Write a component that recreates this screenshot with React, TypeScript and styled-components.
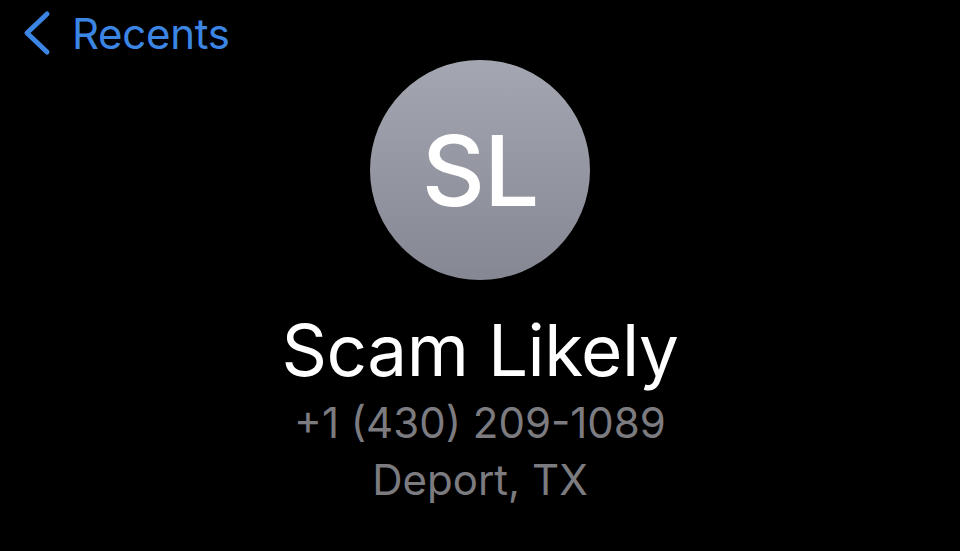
import { createGlobalStyle, styled } from "styled-components";

const GlobalStyle = createGlobalStyle`
  html, body {
    margin: 0;
    padding: 0;
    background: #000;
  }
  body {
    font-family: Inter, "Noto Sans", "Liberation Sans", sans-serif;
    -webkit-font-smoothing: antialiased;
  }
`;

const Screen = styled.div`
  width: 960px;
  height: 551px;
  background: #000;
  overflow: hidden;
  display: flex;
  flex-direction: column;
`;

const NavBar = styled.div`
  display: flex;
  align-items: center;
  height: 66px;
  padding-left: 20px;
`;

const BackButton = styled.button`
  display: flex;
  align-items: center;
  gap: 20px;
  background: none;
  border: none;
  padding: 0;
  color: #3b86e4;
  font-family: inherit;
  font-size: 42px;
  font-weight: 400;
  letter-spacing: -0.3px;
  cursor: pointer;
`;

const Header = styled.div`
  display: flex;
  flex-direction: column;
  align-items: center;
  margin-top: -6px;
`;

const Avatar = styled.div`
  width: 220px;
  height: 220px;
  border-radius: 50%;
  background: linear-gradient(180deg, #a4a7b1 0%, #858792 100%);
  display: flex;
  align-items: center;
  justify-content: center;
  color: #fff;
  font-size: 98px;
  font-weight: 500;
  letter-spacing: -1px;
`;

const Name = styled.h1`
  margin: 27px 0 0;
  color: #fff;
  font-size: 71px;
  font-weight: 400;
  line-height: 87px;
  letter-spacing: -0.5px;
`;

const SubLine = styled.div`
  color: #7b7b80;
  font-size: 42px;
  line-height: 57px;
`;

function Chevron() {
  return (
    <svg width="32" height="48" viewBox="0 0 32 48">
      <path
        d="M27 5 L7 24 L27 43"
        fill="none"
        stroke="#3b86e4"
        strokeWidth="5"
        strokeLinecap="round"
        strokeLinejoin="round"
      />
    </svg>
  );
}

export default function App() {
  return (
    <Screen>
      <GlobalStyle />
      <NavBar>
        <BackButton>
          <Chevron />
          Recents
        </BackButton>
      </NavBar>
      <Header>
        <Avatar>SL</Avatar>
        <Name>Scam Likely</Name>
        <SubLine>+1 (430) 209-1089</SubLine>
        <SubLine>Deport, TX</SubLine>
      </Header>
    </Screen>
  );
}
